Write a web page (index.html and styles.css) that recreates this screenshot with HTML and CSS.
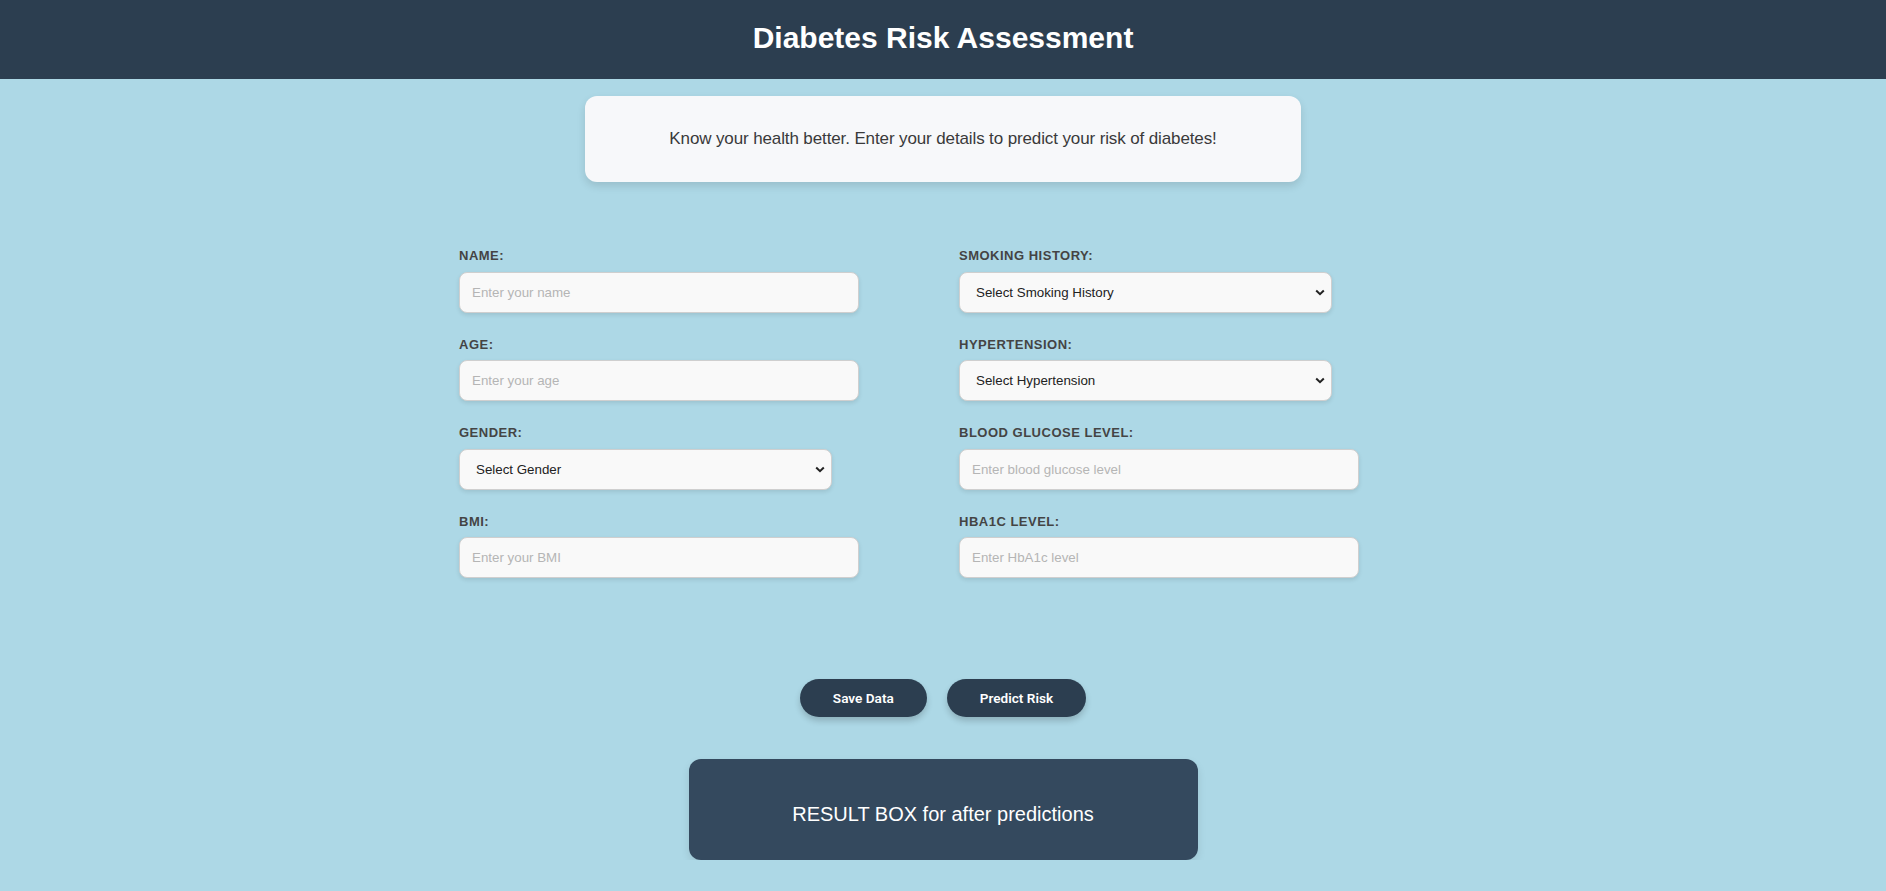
FILE: index.html
```html
<!DOCTYPE html>
<html lang="en">
<head>
<meta charset="UTF-8">
<title>Diabetes Risk Assessment</title>
<link rel="stylesheet" href="styles.css">
</head>
<body>
<header class="site-header">
  <h1 class="site-title">Diabetes Risk Assessment</h1>
</header>
<main class="page">
  <section class="intro-card">
    <p class="intro-text">Know your health better. Enter your details to predict your risk of diabetes!</p>
  </section>

  <form class="risk-form">
    <div class="form-col">
      <div class="form-group">
        <label class="field-label" for="name">Name:</label>
        <input class="text-input" id="name" type="text" placeholder="Enter your name">
      </div>
      <div class="form-group">
        <label class="field-label" for="age">Age:</label>
        <input class="text-input" id="age" type="text" placeholder="Enter your age">
      </div>
      <div class="form-group">
        <label class="field-label" for="gender">Gender:</label>
        <div class="select-wrap">
          <select class="select-input" id="gender">
            <option>Select Gender</option>
          </select>
          <svg class="chevron" width="10" height="7" viewBox="0 0 10 7"><polyline points="1.2,1.5 5,5.2 8.8,1.5" fill="none" stroke="#222" stroke-width="2"/></svg>
        </div>
      </div>
      <div class="form-group">
        <label class="field-label" for="bmi">BMI:</label>
        <input class="text-input" id="bmi" type="text" placeholder="Enter your BMI">
      </div>
    </div>
    <div class="form-col">
      <div class="form-group">
        <label class="field-label" for="smoking">Smoking History:</label>
        <div class="select-wrap">
          <select class="select-input" id="smoking">
            <option>Select Smoking History</option>
          </select>
          <svg class="chevron" width="10" height="7" viewBox="0 0 10 7"><polyline points="1.2,1.5 5,5.2 8.8,1.5" fill="none" stroke="#222" stroke-width="2"/></svg>
        </div>
      </div>
      <div class="form-group">
        <label class="field-label" for="hyper">Hypertension:</label>
        <div class="select-wrap">
          <select class="select-input" id="hyper">
            <option>Select Hypertension</option>
          </select>
          <svg class="chevron" width="10" height="7" viewBox="0 0 10 7"><polyline points="1.2,1.5 5,5.2 8.8,1.5" fill="none" stroke="#222" stroke-width="2"/></svg>
        </div>
      </div>
      <div class="form-group">
        <label class="field-label" for="glucose">Blood Glucose Level:</label>
        <input class="text-input" id="glucose" type="text" placeholder="Enter blood glucose level">
      </div>
      <div class="form-group">
        <label class="field-label" for="hba1c">HbA1c Level:</label>
        <input class="text-input" id="hba1c" type="text" placeholder="Enter HbA1c level">
      </div>
    </div>
  </form>

  <div class="actions">
    <button class="btn" type="button">Save Data</button>
    <button class="btn" type="button">Predict Risk</button>
  </div>

  <section class="result-box">
    <p class="result-text">RESULT BOX for after predictions</p>
  </section>
</main>
</body>
</html>
```

FILE: styles.css
```css
* { box-sizing: border-box; }

html, body {
  margin: 0;
  padding: 0;
}

body {
  background: #add8e6;
  font-family: "Liberation Sans", Arial, sans-serif;
  color: #333;
  overflow: hidden;
}

.site-header {
  background: #2c3e50;
  height: 79px;
  padding: 20px 0 24px;
  text-align: center;
}

.site-title {
  margin: 0;
  color: #fff;
  font-size: 30px;
  line-height: 35px;
  font-weight: bold;
}

.page {
  display: flex;
  flex-direction: column;
  align-items: center;
}

.intro-card {
  width: 716px;
  margin-top: 17px;
  height: 86px;
  background: #f7f8fa;
  border-radius: 12px;
  box-shadow: 0 4px 8px rgba(0, 0, 0, 0.12);
  display: flex;
  align-items: center;
  justify-content: center;
}

.intro-text {
  margin: 0;
  font-size: 17px;
  letter-spacing: -0.12px;
  color: #3a3a3a;
}

.risk-form {
  width: 968px;
  margin-top: 67px;
  display: grid;
  grid-template-columns: 500px 468px;
}

.form-col {
  display: flex;
  flex-direction: column;
}

.form-group {
  margin-bottom: 25px;
}

.field-label {
  display: block;
  font-size: 13px;
  line-height: 14.5px;
  font-weight: bold;
  letter-spacing: 0.5px;
  text-transform: uppercase;
  color: #444;
  margin-bottom: 8px;
}

.text-input {
  display: block;
  width: 400px;
  height: 41px;
  padding: 0 12px;
  border: 1px solid #cfcfcf;
  border-radius: 8px;
  background: #f9f9f9;
  box-shadow: 0 2px 4px rgba(0, 0, 0, 0.1);
  font-family: "Liberation Sans", Arial, sans-serif;
  font-size: 13.33px;
  color: #222;
  outline: none;
}

.text-input::placeholder {
  color: #b5b5b5;
}

.select-wrap {
  position: relative;
  width: 373px;
}

.select-input {
  display: block;
  width: 373px;
  height: 41px;
  padding: 0 24px 0 16px;
  border: 1px solid #cfcfcf;
  border-radius: 8px;
  background: #f9f9f9;
  box-shadow: 0 2px 4px rgba(0, 0, 0, 0.1);
  font-family: "Liberation Sans", Arial, sans-serif;
  font-size: 13.33px;
  color: #222;
  appearance: none;
  -webkit-appearance: none;
  outline: none;
}

.chevron {
  position: absolute;
  right: 7px;
  top: 17px;
  pointer-events: none;
}

.actions {
  display: flex;
  gap: 20px;
  margin-top: 76px;
}

.btn {
  height: 38px;
  padding: 0 33px;
  border: none;
  border-radius: 19px;
  background: #2c3e50;
  color: #fff;
  font-family: Roboto, "Liberation Sans", Arial, sans-serif;
  font-weight: 600;
  font-size: 13.6px;
  box-shadow: 0 4px 6px rgba(0, 0, 0, 0.18);
  cursor: pointer;
}

.result-box {
  width: 509px;
  height: 101px;
  margin-top: 42px;
  padding: 44px 20px 0;
  background: #34495e;
  border-radius: 12px;
  box-shadow: 0 4px 8px rgba(0, 0, 0, 0.1);
  text-align: center;
}

.result-text {
  margin: 0;
  color: #fff;
  font-size: 20px;
  line-height: 23px;
}
```
